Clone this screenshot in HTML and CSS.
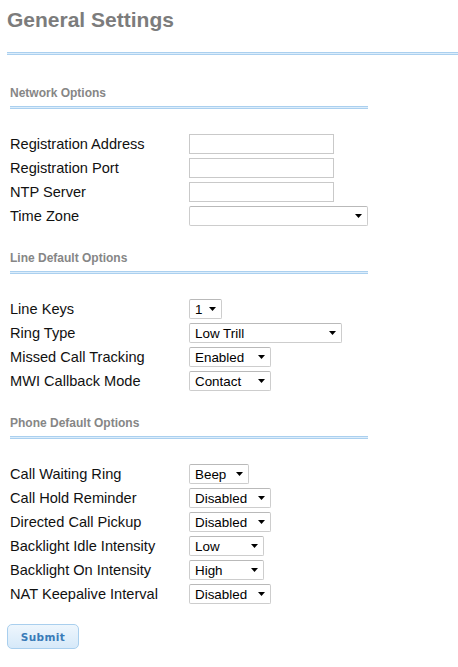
FILE: index.html
```html
<!DOCTYPE html>
<html lang="en">
<head>
<meta charset="utf-8">
<title>General Settings</title>
<link rel="stylesheet" href="styles.css">
</head>
<body>
<div class="page">
  <h1 class="title">General Settings</h1>
  <div class="rule main-rule"></div>

  <form class="settings">
    <section class="group">
      <h2 class="group-title">Network Options</h2>
      <div class="rule group-rule"></div>
      <div class="fields">
        <label class="label" for="reg-addr">Registration Address</label>
        <input class="text-input" id="reg-addr" type="text">
        <label class="label" for="reg-port">Registration Port</label>
        <input class="text-input" id="reg-port" type="text">
        <label class="label" for="ntp">NTP Server</label>
        <input class="text-input" id="ntp" type="text">
        <label class="label" for="tz">Time Zone</label>
        <span class="select w-tz"><select id="tz"><option></option></select><svg class="arrow" width="7" height="4" viewBox="0 0 7 4"><path d="M0 0H7L3.5 4Z"/></svg></span>
      </div>
    </section>

    <section class="group">
      <h2 class="group-title">Line Default Options</h2>
      <div class="rule group-rule"></div>
      <div class="fields">
        <label class="label" for="line-keys">Line Keys</label>
        <span class="select w-keys"><select id="line-keys"><option>1</option></select><svg class="arrow" width="7" height="4" viewBox="0 0 7 4"><path d="M0 0H7L3.5 4Z"/></svg></span>
        <label class="label" for="ring">Ring Type</label>
        <span class="select w-ring"><select id="ring"><option>Low Trill</option></select><svg class="arrow" width="7" height="4" viewBox="0 0 7 4"><path d="M0 0H7L3.5 4Z"/></svg></span>
        <label class="label" for="missed">Missed Call Tracking</label>
        <span class="select w-mid"><select id="missed"><option>Enabled</option></select><svg class="arrow" width="7" height="4" viewBox="0 0 7 4"><path d="M0 0H7L3.5 4Z"/></svg></span>
        <label class="label" for="mwi">MWI Callback Mode</label>
        <span class="select w-mid"><select id="mwi"><option>Contact</option></select><svg class="arrow" width="7" height="4" viewBox="0 0 7 4"><path d="M0 0H7L3.5 4Z"/></svg></span>
      </div>
    </section>

    <section class="group">
      <h2 class="group-title">Phone Default Options</h2>
      <div class="rule group-rule"></div>
      <div class="fields">
        <label class="label" for="cw-ring">Call Waiting Ring</label>
        <span class="select w-beep"><select id="cw-ring"><option>Beep</option></select><svg class="arrow" width="7" height="4" viewBox="0 0 7 4"><path d="M0 0H7L3.5 4Z"/></svg></span>
        <label class="label" for="hold">Call Hold Reminder</label>
        <span class="select w-mid"><select id="hold"><option>Disabled</option></select><svg class="arrow" width="7" height="4" viewBox="0 0 7 4"><path d="M0 0H7L3.5 4Z"/></svg></span>
        <label class="label" for="pickup">Directed Call Pickup</label>
        <span class="select w-mid"><select id="pickup"><option>Disabled</option></select><svg class="arrow" width="7" height="4" viewBox="0 0 7 4"><path d="M0 0H7L3.5 4Z"/></svg></span>
        <label class="label" for="bl-idle">Backlight Idle Intensity</label>
        <span class="select w-bl"><select id="bl-idle"><option>Low</option></select><svg class="arrow" width="7" height="4" viewBox="0 0 7 4"><path d="M0 0H7L3.5 4Z"/></svg></span>
        <label class="label" for="bl-on">Backlight On Intensity</label>
        <span class="select w-bl"><select id="bl-on"><option>High</option></select><svg class="arrow" width="7" height="4" viewBox="0 0 7 4"><path d="M0 0H7L3.5 4Z"/></svg></span>
        <label class="label" for="nat">NAT Keepalive Interval</label>
        <span class="select w-mid"><select id="nat"><option>Disabled</option></select><svg class="arrow" width="7" height="4" viewBox="0 0 7 4"><path d="M0 0H7L3.5 4Z"/></svg></span>
      </div>
    </section>

    <div class="actions">
      <button class="submit" type="button">Submit</button>
    </div>
  </form>
</div>
</body>
</html>
```

FILE: styles.css
```css
html, body {
  margin: 0;
  padding: 0;
  background: #ffffff;
}

body {
  font-family: "Liberation Sans", Arial, sans-serif;
  color: #111111;
  overflow: hidden;
}

.page {
  padding: 8px 0 0 7px;
}

.title {
  margin: 0;
  font-size: 21px;
  line-height: 24px;
  font-weight: bold;
  color: #7c7c7c;
}

.rule {
  height: 1px;
  border-top: 1px solid #abd0ef;
  border-bottom: 1px solid #abd0ef;
  background: #dcedfb;
}

.main-rule {
  margin-top: 20px;
}

.settings {
  margin: 0;
  padding-left: 3px;
}

.group-title {
  margin: 0;
  font-size: 12px;
  line-height: 14px;
  font-weight: bold;
  color: #868686;
}

.group:first-child .group-title {
  margin-top: 31px;
}

.group + .group .group-title {
  margin-top: 25px;
}

.group-rule {
  margin: 6px 0 0 0;
  width: 358px;
}

.fields {
  display: grid;
  grid-template-columns: 179px auto;
  grid-auto-rows: 20px;
  row-gap: 4px;
  align-items: center;
  justify-items: start;
  margin-top: 25px;
}

.label {
  font-size: 14.6px;
  line-height: 17px;
  color: #111111;
}

.text-input {
  box-sizing: border-box;
  width: 145px;
  height: 20px;
  margin: 0;
  padding: 0 4px;
  border: 1px solid #c9c9c9;
  border-radius: 0;
  background: #ffffff;
  font: 13px "Liberation Sans", Arial, sans-serif;
  outline: none;
}

.select {
  position: relative;
  display: inline-flex;
  height: 20px;
}

.select select {
  box-sizing: border-box;
  width: 100%;
  height: 20px;
  margin: 0;
  padding: 0 14px 0 5px;
  border: 1px solid #cdcdcd;
  border-top-color: #b9b9b9;
  border-radius: 2px;
  background: #ffffff;
  color: #000000;
  font: 13.4px "Liberation Sans", Arial, sans-serif;
  -webkit-appearance: none;
  appearance: none;
  outline: none;
}

.select .arrow {
  position: absolute;
  right: 6px;
  top: 8px;
  fill: #000000;
  pointer-events: none;
}

.w-tz { width: 179px; }
.w-keys { width: 33px; }
.w-ring { width: 153px; }
.w-mid { width: 82px; }
.w-beep { width: 60px; }
.w-bl { width: 75px; }

.actions {
  margin-top: 20px;
  margin-left: -3px;
}

.submit {
  box-sizing: border-box;
  width: 72px;
  height: 25px;
  margin: 0;
  padding: 0;
  border: 1px solid #a9cfee;
  border-radius: 5px;
  background: linear-gradient(#eef6fd, #d6e9f9);
  color: #3a7bb8;
  font-family: "DejaVu Sans", Verdana, sans-serif;
  font-size: 10.5px;
  font-weight: bold;
  letter-spacing: 0.4px;
  cursor: pointer;
}
```
